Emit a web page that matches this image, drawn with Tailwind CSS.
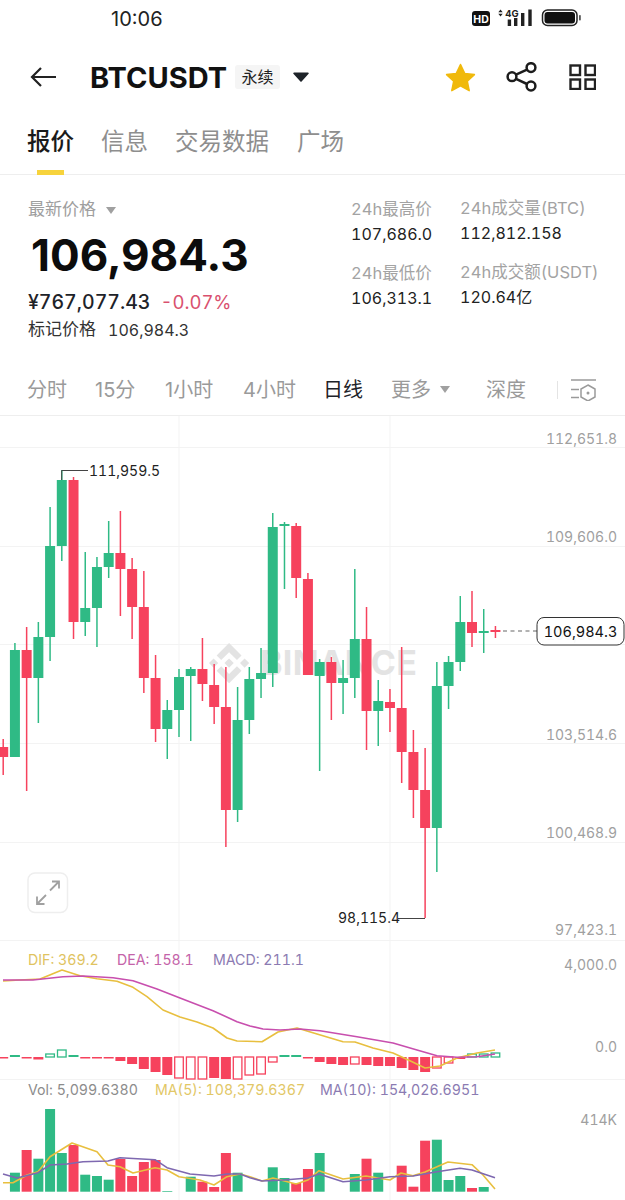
<!DOCTYPE html>
<html lang="en">
<head>
  <meta charset="UTF-8" />
  <meta name="viewport" content="width=device-width, initial-scale=1.0" />
  <title>BTCUSDT</title>
  <script src="https://cdn.jsdelivr.net/npm/@tailwindcss/browser@4"></script>
</head>
<body class="bg-white font-['Inter','Noto_Sans_CJK_SC',sans-serif] tabular-nums w-[625px] h-[1200px] overflow-hidden text-[#1e2329]">
  <!-- Status bar -->
  <div class="h-[36px] flex items-center">
    <span class="ml-[111px] text-[20px] leading-none text-[#222] mt-[1px] [font-variant-numeric:normal]">10:06</span>
    <svg class="ml-auto mr-[43px]" width="110" height="36" viewBox="473 0 110 36">
      <rect x="473" y="11" width="18" height="15" rx="3" fill="#111"/>
      <text x="482" y="22.5" text-anchor="middle" font-size="10.5" font-weight="700" fill="#fff">HD</text>
      <path d="M501.5 9.5l2.2 2.8h-4.4zM501.5 16.5l2.2-2.8h-4.4z" fill="#222"/>
      <text x="513" y="16.5" text-anchor="middle" font-size="9.5" font-weight="700" fill="#222">4G</text>
      <rect x="508.7" y="19.5" width="3.4" height="6.5" fill="#222"/>
      <rect x="515" y="18" width="3.4" height="8" fill="#222"/>
      <rect x="522" y="13" width="3.4" height="13" fill="#222"/>
      <rect x="529.3" y="9.5" width="3.4" height="16.5" fill="#222"/>
      <rect x="543.5" y="10" width="34.5" height="15.5" rx="5" fill="none" stroke="#222" stroke-width="1.5"/>
      <rect x="545.5" y="12" width="30.5" height="11.5" rx="3" fill="#111"/>
      <rect x="580" y="15" width="1.8" height="5.5" rx="0.8" fill="#555"/>
    </svg>
  </div>

  <!-- Header -->
  <div class="h-[82px] flex items-center">
    <svg class="ml-[30px]" width="26" height="22" viewBox="0 0 26 22" fill="none" stroke="#222" stroke-width="2.2">
      <path d="M26 11H2M11 2l-9 9 9 9"/>
    </svg>
    <span class="ml-[34px] text-[29px] font-bold leading-none text-[#111]">BTCUSDT</span>
    <span class="ml-[8px] w-[45px] h-[24px] flex items-center justify-center bg-[#f5f5f5] rounded-[3px] text-[16px] text-[#222]">永续</span>
    <svg class="ml-[13px]" width="16" height="10" viewBox="0 0 16 10"><path d="M1 0.5h14a.8.8 0 0 1 .6 1.3L8.6 9.4a.8.8 0 0 1-1.2 0L.4 1.8A.8.8 0 0 1 1 .5z" fill="#1e2329"/></svg>
    <svg class="ml-auto" width="31" height="29" viewBox="0 0 31 29"><path d="M15.5 1.5l4.2 8.9 9.7 1.2-7.1 6.6 1.9 9.5-8.7-4.8-8.7 4.8 1.9-9.5-7.1-6.6 9.7-1.2z" fill="#f0b90b" stroke="#f0b90b" stroke-width="1.5" stroke-linejoin="round"/></svg>
    <svg class="ml-[30px]" width="32" height="30" viewBox="0 0 32 30" fill="none" stroke="#1c1c1c" stroke-width="2.5">
      <circle cx="25" cy="5.6" r="4.4"/><circle cx="25" cy="24" r="4.4"/><circle cx="6" cy="14.7" r="4.4"/>
      <path d="M10 12.6l11-5M10 16.8l11 5.2"/>
    </svg>
    <svg class="ml-[31px] mr-[29px]" width="27" height="26" viewBox="0 0 27 26" fill="none" stroke="#222" stroke-width="2.4">
      <rect x="1.5" y="1.5" width="9.5" height="9.5"/><rect x="16.5" y="1.5" width="9.5" height="9.5"/>
      <rect x="1.5" y="15.5" width="9.5" height="9.5"/><rect x="16.5" y="15.5" width="9.5" height="9.5"/>
    </svg>
  </div>

  <!-- Tabs -->
  <div class="h-[57px] border-b border-[#eeeeee] flex pl-[27px] text-[23.5px] text-[#8e8e8e] whitespace-nowrap">
    <div class="w-[47px] relative flex justify-center pt-[6px] font-medium text-[#1a1a1a] leading-[36px]">
      报价
      <span class="absolute left-[10px] bottom-[-1px] w-[27px] h-[5px] bg-[#f7d33c]"></span>
    </div>
    <div class="ml-[27px] pt-[6px] leading-[36px]">信息</div>
    <div class="ml-[27px] pt-[6px] leading-[36px]">交易数据</div>
    <div class="ml-[28px] pt-[6px] leading-[36px]">广场</div>
  </div>

  <!-- Price block -->
  <div class="h-[191px] flex">
    <div class="w-[351px] pl-[28px] pt-[23px]">
      <div class="h-[24px] flex items-center text-[17px] text-[#9e9e9e]">
        最新价格
        <svg class="ml-[10px]" width="10" height="7" viewBox="0 0 10 7"><path d="M0 0h10L5 7z" fill="#a0a0a0"/></svg>
      </div>
      <div class="h-[66px] flex items-center pl-[3px] text-[44px] font-bold leading-none text-[#0c0c0c] [font-variant-numeric:normal]">106,984.3</div>
      <div class="mt-[3px] h-[24px] flex items-center text-[19.5px] font-medium text-[#1e2329]">
        ¥767,077.43<span class="ml-[10px] text-[18.5px] text-[#d9506e] font-normal">-0.07%</span>
      </div>
      <div class="mt-[3px] h-[24px] flex items-center text-[#333]">
        <span class="text-[17px]">标记价格</span><span class="ml-[12px] text-[16px]">106,984.3</span>
      </div>
    </div>
    <div class="w-[109px] pt-[22px]">
      <div class="h-[24px] leading-[24px] text-[16.5px] text-[#a3a3a3]">24h最高价</div>
      <div class="mt-[1px] h-[24px] leading-[24px] text-[16px] text-[#222]">107,686.0</div>
      <div class="mt-[15px] h-[24px] leading-[24px] text-[16.5px] text-[#a3a3a3]">24h最低价</div>
      <div class="mt-[1px] h-[24px] leading-[24px] text-[16px] text-[#222]">106,313.1</div>
    </div>
    <div class="pt-[21px]">
      <div class="h-[24px] leading-[24px] text-[16.5px] text-[#a3a3a3] whitespace-nowrap">24h成交量(BTC)</div>
      <div class="mt-[1px] h-[24px] leading-[24px] text-[16px] text-[#222]">112,812.158</div>
      <div class="mt-[15px] h-[24px] leading-[24px] text-[16.5px] text-[#a3a3a3] whitespace-nowrap">24h成交额(USDT)</div>
      <div class="mt-[1px] h-[24px] leading-[24px] text-[16px] text-[#222]">120.64亿</div>
    </div>
  </div>

  <!-- Interval row -->
  <div class="h-[50px] border-b border-[#eeeeee] flex items-center pl-[27px] text-[20px] text-[#9a9a9a] pb-[2px] whitespace-nowrap [font-variant-numeric:normal]">
    <span class="w-[40px]">分时</span>
    <span class="ml-[28px] w-[42px]">15分</span>
    <span class="ml-[28px] w-[50px]">1小时</span>
    <span class="ml-[28px] w-[51px]">4小时</span>
    <span class="ml-[29px] w-[40px] text-[#1e2329]">日线</span>
    <span class="ml-[28px] w-[40px]">更多</span>
    <svg class="ml-[9px]" width="10" height="7" viewBox="0 0 10 7"><path d="M0 0h10L5 7z" fill="#a0a0a0"/></svg>
    <span class="ml-[36px] w-[40px]">深度</span>
    <span class="ml-[31px] w-px h-[18px] bg-[#e4e4e4]"></span>
    <svg class="ml-[13px]" width="26" height="22" viewBox="0 0 26 22" fill="none" stroke="#9a9a9a" stroke-width="1.5">
      <path d="M0 1h25M0 10.5h8M0 18.5h8"/>
      <path d="M17 6l7 4v8l-7 4-7-4v-8z"/>
      <circle cx="17" cy="14" r="1.5" fill="#9a9a9a" stroke="none"/>
    </svg>
  </div>

  <!-- Chart canvas: coordinates are page pixels -->
  <svg id="chart" class="block" width="625" height="784" viewBox="0 416 625 784">
    <g stroke="#f3f3f3" stroke-width="1">
      <path d="M0 447.5H625M0 546.5H625M0 644.5H625M0 743.5H625M0 842.5H625M0 940.5H625M0 1079.5H625"/>
      <path d="M179 416V1200M390 416V1200"/>
    </g>
    <!-- Watermark -->
    <g fill="#e3e3e3">
      <g transform="translate(209 643) scale(0.32)">
        <path d="M38.171 53.203L62.759 28.616l24.6 24.6 14.307-14.307L62.759 0 23.864 38.896zM0 62.759l14.307-14.307 14.307 14.307-14.307 14.307zM38.171 72.316l24.588 24.587 24.6-24.6 14.307 14.3-.007.007L62.759 125.52 23.864 86.624l-.021-.021zM96.904 62.766l14.307-14.307 14.307 14.307-14.307 14.307zM77.271 62.752h.007L62.759 48.233 52.03 58.962l-1.232 1.233-2.543 2.543-.02.02.02.021 14.504 14.504 14.519-14.519.007-.007z"/>
      </g>
      <text x="260" y="675" font-size="34" font-weight="700" textLength="157" lengthAdjust="spacing">BINANCE</text>
    </g>
    <!-- Axis labels -->
    <g fill="#a0a0a0" font-size="14" text-anchor="end">
      <text x="617" y="444">112,651.8</text>
      <text x="617" y="542">109,606.0</text>
      <text x="617" y="640">106,560.3</text>
      <text x="617" y="740">103,514.6</text>
      <text x="617" y="838">100,468.9</text>
      <text x="617" y="935">97,423.1</text>
      <text x="617" y="970">4,000.0</text>
      <text x="617" y="1052">0.0</text>
      <text x="617" y="1125">414K</text>
    </g>
    <g id="plots"></g>
    <!-- High / low marks -->
    <path d="M61.7 480V470.5H88" fill="none" stroke="#444" stroke-width="1"/>
    <text x="89" y="476" font-size="14" fill="#222">111,959.5</text>
    <path d="M398 918.5H425" fill="none" stroke="#444" stroke-width="1"/>
    <text x="338" y="923" font-size="14" fill="#222">98,115.4</text>
    <!-- Last price -->
    <path d="M503 631H537" stroke="#666" stroke-width="1.2" stroke-dasharray="4 3.5"/>
    <rect x="537" y="617.5" width="87" height="27.5" rx="7" fill="#fff" fill-opacity="0.93" stroke="#333" stroke-width="1"/>
    <text x="580.5" y="636.5" font-size="14.5" text-anchor="middle" fill="#111">106,984.3</text>
    <!-- Expand button -->
    <rect x="28" y="873" width="39.5" height="39.5" rx="7" fill="#fff" stroke="#eeeeee" stroke-width="1.5"/>
    <g fill="none" stroke="#a0a0a0" stroke-width="1.8">
      <path d="M50 890.5l8.5-8.5M52 881.5h7v7"/>
      <path d="M46 895l-9 9M37 896.5v7.5h7.5"/>
    </g>
    <!-- Indicator legends -->
    <g font-size="14.2">
      <text x="28" y="965" fill="#e0c35f">DIF: 369.2</text>
      <text x="117" y="965" fill="#c463a9">DEA: 158.1</text>
      <text x="213" y="965" fill="#8b7bb2">MACD: 211.1</text>
      <text x="28" y="1095" fill="#8c8c8c">Vol: 5,099.6380</text>
      <text x="155" y="1095" fill="#e2c766">MA(5): 108,379.6367</text>
      <text x="320" y="1095" fill="#8b7bb2">MA(10): 154,026.6951</text>
    </g>
  </svg>

  <script>
    const GREEN = "#2fba85", RED = "#f6425d";
    const step = 11.72, x0 = 3.2;
    const xAt = i => x0 + step * i;

    // [colour, high, bodyTop, bodyBottom, low]
    const candles = [
      ["r",739,747,757,775], ["g",643,650,757,757], ["r",627,650,678,791], ["g",622,637,678,723],
      ["g",507,546,637,661], ["g",470,480,546,561], ["r",477,480,622,639], ["g",552,608,622,636],
      ["g",557,567,608,647], ["g",521,553,567,578], ["r",511,553,569,616], ["r",558,569,607,639],
      ["r",571,607,678,693], ["r",655,678,729,742], ["g",700,710,729,759], ["g",669,677,710,737],
      ["g",667,669,676,741], ["r",638,669,684,701], ["r",664,685,707,724], ["r",667,707,810,847],
      ["g",687,720,810,822], ["g",667,679,720,734], ["g",648,673,679,698], ["g",513,527,673,687],
      ["g",522,524,526,589], ["r",523,526,578,598], ["r",573,579,675,675], ["g",659,662,676,771],
      ["r",657,662,683,720], ["g",660,678,683,714], ["g",569,639,678,698], ["r",607,639,711,750],
      ["g",680,701,711,746], ["r",689,702,708,732], ["r",647,708,752,783], ["r",730,752,790,818],
      ["r",748,790,828,918], ["g",662,686,828,872], ["g",656,662,686,709], ["g",596,622,662,671],
      ["r",591,622,633,647], ["g",609,631,633,653], ["r",626,630,632,638]
    ];

    // MACD histogram: [colour, hollow, y end] measured from the zero line at 1057
    const hist = [
      ["r",0,1058.5],["g",0,1055],["r",0,1058.5],["r",0,1059.5],["g",1,1054],["g",1,1050],["g",0,1055],
      ["r",0,1058.5],["r",0,1058.5],["r",0,1058.5],["r",0,1061],["r",0,1064],["r",0,1069],["r",0,1072],
      ["r",0,1075],["r",1,1078],["r",1,1079],["r",1,1079],["r",0,1078],["r",0,1079],["r",1,1079],
      ["r",1,1075],["r",1,1074],["r",1,1062],["g",0,1055],["g",0,1055],["r",0,1058.5],["r",0,1062],
      ["r",0,1064],["r",0,1065],["r",1,1064],["r",0,1065],["r",0,1066],["r",0,1066],["r",0,1068],
      ["r",0,1070],["r",0,1072],["r",1,1068],["r",1,1063],["r",0,1059],["g",1,1054],["g",1,1054],["g",1,1053]
    ];

    // Volume bars: [index, colour, top]
    const volume = [
      [1,"g",1172.7],[2,"r",1150],[3,"g",1158.7],[4,"g",1109],[5,"g",1153],[6,"r",1145],[7,"g",1174.7],
      [8,"g",1176],[9,"g",1179.7],[10,"r",1159],[11,"r",1176],[12,"r",1162],[13,"r",1160],[14,"g",1191],
      [16,"g",1176.7],[17,"r",1181.7],[18,"r",1187],[19,"r",1153],[20,"g",1172.7],[23,"g",1167.3],
      [24,"g",1178],[25,"r",1183],[26,"r",1169],[27,"g",1153],[30,"g",1174],[31,"r",1158.7],[32,"g",1172.7],
      [34,"r",1165.7],[35,"r",1186.7],[36,"r",1140.7],[37,"g",1139.7],[38,"g",1180],[39,"g",1176],
      [40,"r",1188],[41,"g",1187]
    ];

    const lines = [
      ["#e8bf3f", "3,981 20,980 40,979 62,970 80,975.7 97,978.7 117,981.3 133,987.3 147,996.7 163,1010 180,1017 197,1022 213,1028 227,1038 237,1041 262,1041.7 278,1032 297,1028 317,1034 343,1041.7 355,1042 373,1048 393,1053 410,1060.7 425,1068 440,1066 457,1058 477,1053 495,1050"],
      ["#c84fae", "3,980 33,980 63,976.7 83,976 113,977.7 133,980.7 157,989 180,998 213,1010.7 237,1021.7 250,1026 263,1029 280,1030 300,1029 320,1030.7 357,1036.7 393,1043 417,1050 437,1055.7 457,1057.3 477,1056.7 495,1054"]
    ];
    const volLines = [
      ["#e8bf3f", "3,1182.7 13,1182.7 27,1175 38,1171.7 50,1156.7 72,1143 97,1151.7 108,1165 120,1166.7 133,1173 155,1167.7 167,1170 179,1176.7 200,1180 214,1185 227,1176.7 240,1174 250,1176.7 262,1181 273,1178 296,1184 308,1180 319,1170.7 343,1179 366,1176 390,1180 401,1173 413,1175.7 425,1172 437,1166.7 448,1162 472,1164.7 483,1175 495,1189"],
      ["#7e68b0", "3,1174 17,1178 38,1172.7 50,1165 67,1164 83,1161.7 108,1161 120,1157.7 155,1159.7 167,1167.7 190,1174 214,1176 227,1174 240,1174 250,1177.7 262,1181 284,1180 308,1178 319,1174 343,1181.7 366,1180 390,1176.7 413,1176 437,1171.7 460,1168.3 472,1170 495,1177.7"]
    ];

    const plots = document.getElementById("plots");
    function add(tag, attrs) {
      const el = document.createElementNS("http://www.w3.org/2000/svg", tag);
      for (const k in attrs) el.setAttribute(k, attrs[k]);
      plots.appendChild(el);
    }

    candles.forEach(([c, hi, top, bot, lo], i) => {
      const col = c === "g" ? GREEN : RED, x = xAt(i);
      add("line", { x1: x, x2: x, y1: hi, y2: lo, stroke: col, "stroke-width": 1.5 });
      add("rect", { x: x - 5, y: top, width: 10, height: Math.max(bot - top, 1.5), fill: col });
    });

    hist.forEach(([c, hollow, end], i) => {
      const col = c === "g" ? GREEN : RED, x = xAt(i);
      const y = Math.min(end, 1057), h = Math.abs(end - 1057);
      if (hollow) add("rect", { x: x - 4.3, y, width: 8.6, height: h, fill: "#fff", stroke: col, "stroke-width": 1.3 });
      else add("rect", { x: x - 5, y, width: 10, height: h, fill: col });
    });
    lines.forEach(([col, pts]) => add("polyline", { points: pts, fill: "none", stroke: col, "stroke-width": 1.6, "stroke-linejoin": "round" }));

    volume.forEach(([i, c, top]) => {
      add("rect", { x: xAt(i) - 5, y: top, width: 10, height: 1191.7 - top, fill: c === "g" ? GREEN : RED });
    });
    volLines.forEach(([col, pts]) => add("polyline", { points: pts, fill: "none", stroke: col, "stroke-width": 1.6, "stroke-linejoin": "round" }));
  </script>
</body>
</html>
